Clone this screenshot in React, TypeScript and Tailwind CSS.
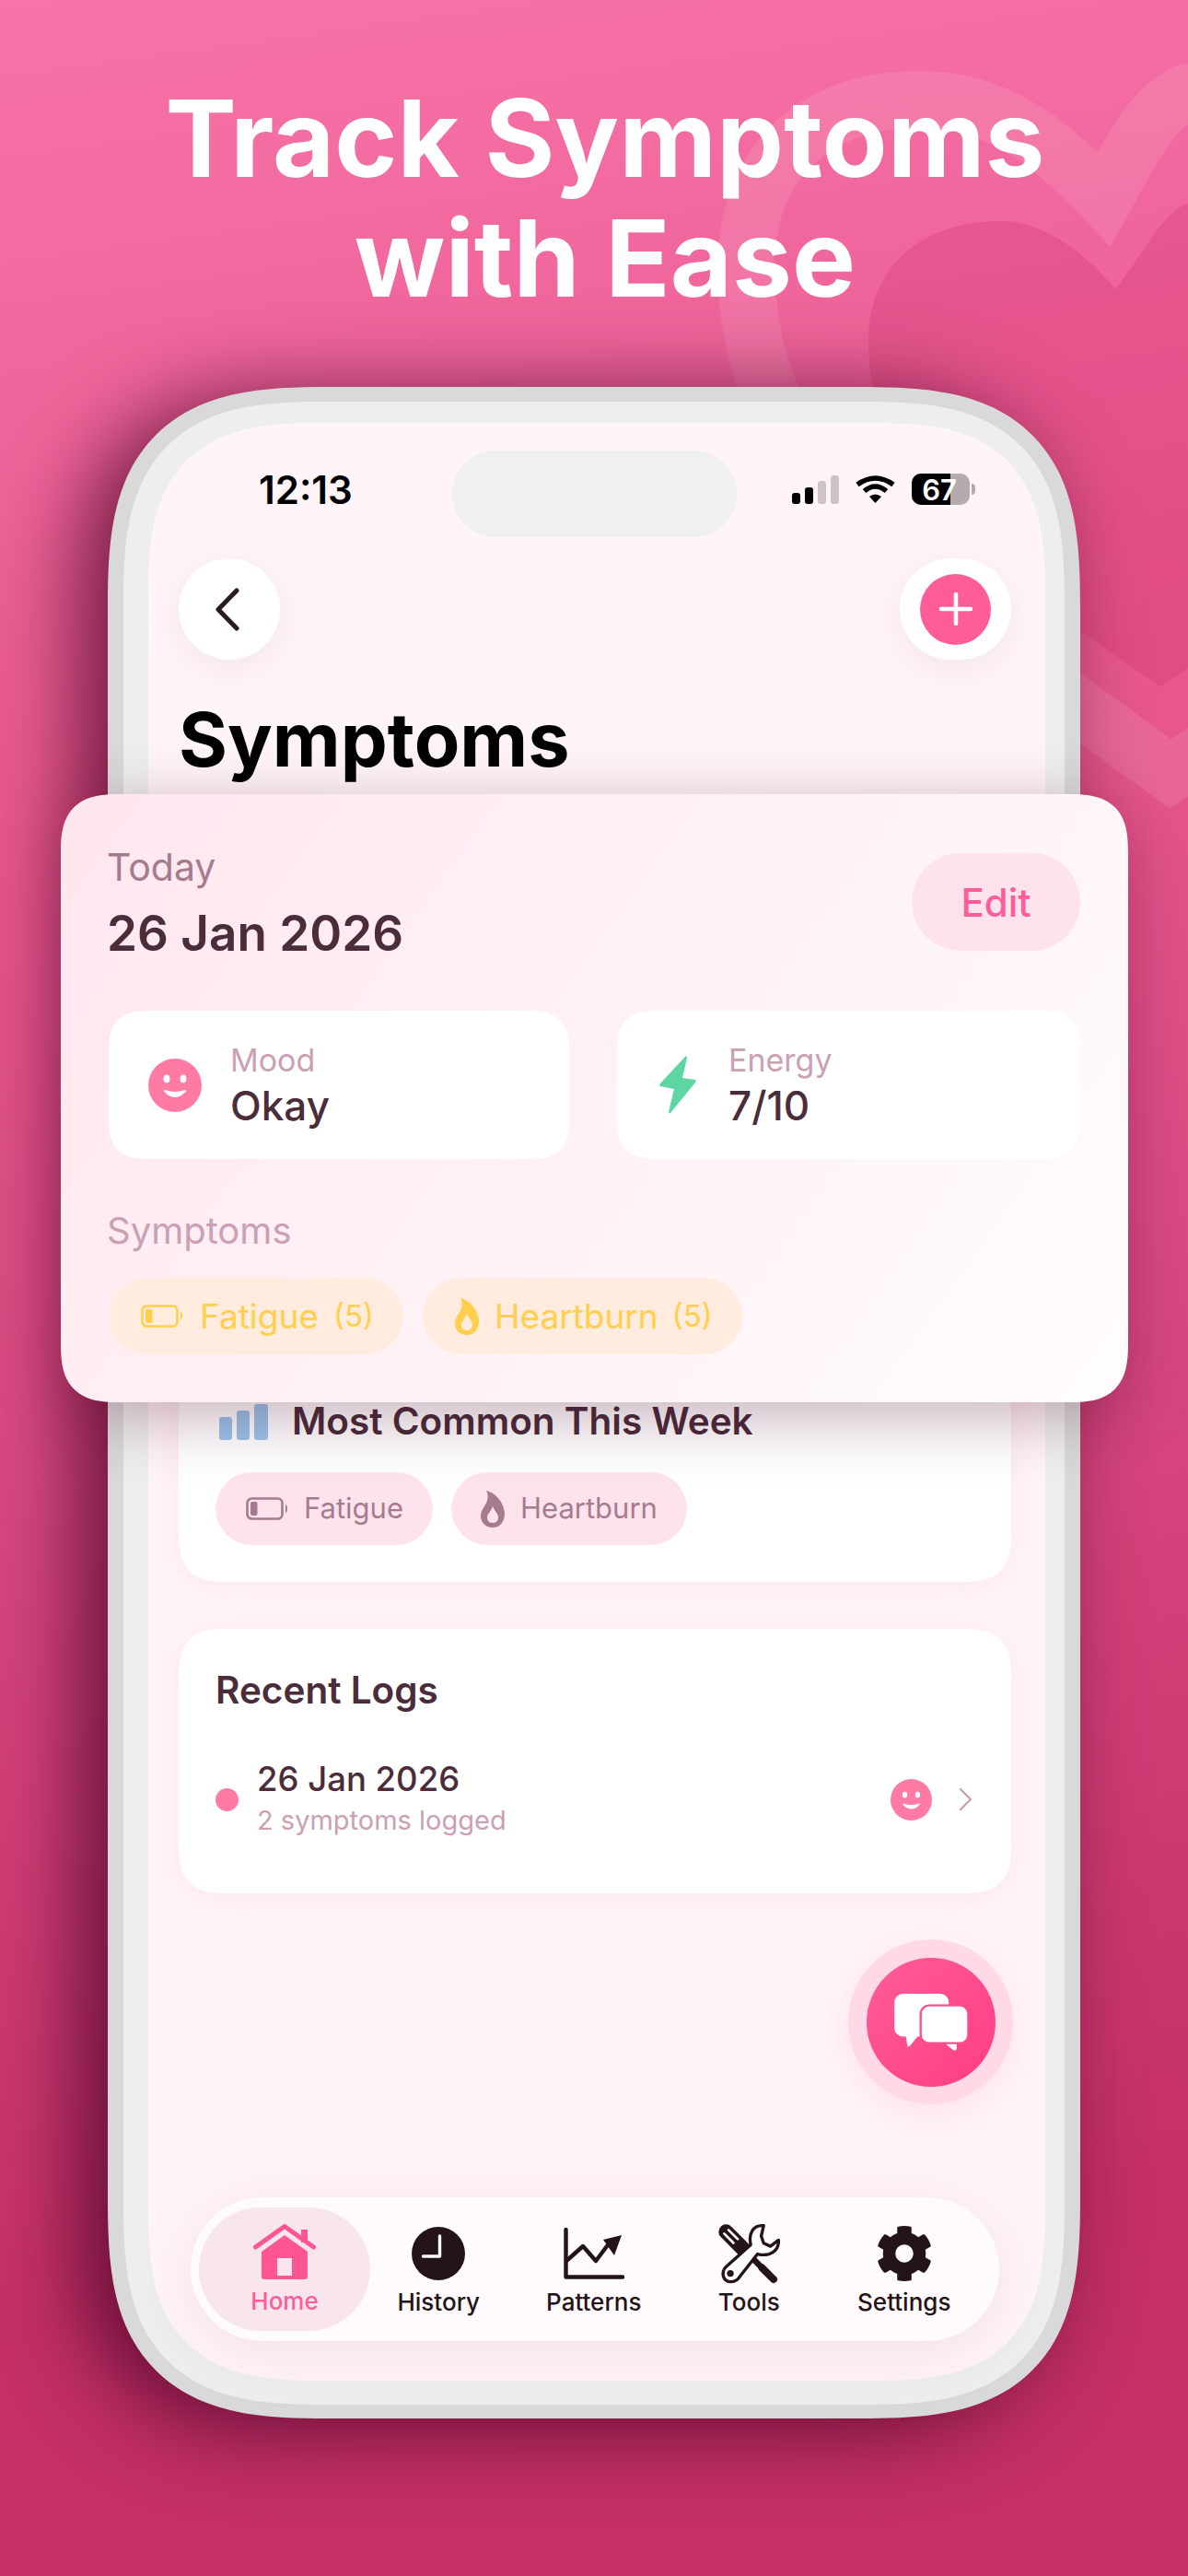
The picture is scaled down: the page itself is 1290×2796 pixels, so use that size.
import { FaCog } from "react-icons/fa";

function Hearts() {
  return (
    <svg className="absolute inset-0" width="1290" height="1000" viewBox="0 0 1290 1000" fill="none">
      <path
        d="M1211 314 C1175 270 1130 240 1087 240 C1000 240 943 290 943 370 C943 470 1000 570 1100 635 L1260 745 L1400 650 C1480 500 1480 221 1290 221 C1262 230 1240 278 1211 314 Z"
        fill="rgba(200,40,100,0.23)"
      />
      <path
        d="M1199 216 C1150 165 1090 108 1000 108 C880 108 810 180 810 290 C810 440 900 560 1010 650 L1271 840 L1420 740 C1560 560 1540 100 1290 100 C1250 115 1225 170 1199 216 Z"
        stroke="rgba(255,255,255,0.1)"
        strokeWidth="62"
      />
    </svg>
  );
}

function Smiley({ size }: { size: number }) {
  return (
    <svg width={size} height={size} viewBox="0 0 58 58" className="shrink-0">
      <circle cx="29" cy="29" r="29" fill="#ff7ba4" />
      <ellipse cx="20" cy="22" rx="3.4" ry="4.4" fill="#fff" />
      <ellipse cx="38" cy="22" rx="3.4" ry="4.4" fill="#fff" />
      <path d="M18 35 Q29 47 40 35 Q29 39 18 35 Z" fill="#fff" stroke="#fff" strokeWidth="2" strokeLinejoin="round" />
    </svg>
  );
}

function BatteryLow({ color, className }: { color: string; className?: string }) {
  return (
    <svg width="46" height="25" viewBox="0 0 46 25" fill="none" className={className}>
      <rect x="1.5" y="1.5" width="38" height="22" rx="5" stroke={color} strokeWidth="2.6" />
      <rect x="5" y="5" width="7.5" height="15" rx="2" fill={color} />
      <path d="M43.5 8.5 Q46 12.5 43.5 16.5 Z" fill={color} stroke={color} strokeWidth="1" />
    </svg>
  );
}

function Flame({ color }: { color: string }) {
  return (
    <svg width="26" height="40" viewBox="0 0 26 40" className="shrink-0">
      <path
        fillRule="evenodd"
        fill={color}
        d="M6 0 C12 1 24 8 26 24 C26 34 21 40 13 40 C5 40 0 34 0 28 C0 20 5 17 7 11 C8 7 8 3 6 0 Z M13 35 C9 35 7 32 7 29 C7 25 11 23 13 17 C15 22 19 25 19 29 C19 32 17 35 13 35 Z"
      />
    </svg>
  );
}

function HomeIcon() {
  return (
    <svg width="68" height="60" viewBox="0 0 68 60" fill="none">
      <path d="M2.5 25 L34 2.5 L65.5 25" stroke="#ff5594" strokeWidth="5" strokeLinecap="round" strokeLinejoin="round" />
      <rect x="52" y="6" width="7" height="14" fill="#ff5594" />
      <path d="M9 30 L34 12 L59 30 V57 a3 3 0 0 1 -3 3 H12 a3 3 0 0 1 -3 -3 Z" fill="#ff5594" />
      <rect x="26" y="37" width="16" height="19" fill="#f8e6ec" />
    </svg>
  );
}

function ClockIcon() {
  return (
    <svg width="58" height="58" viewBox="0 0 58 58" fill="none">
      <circle cx="29" cy="29" r="29" fill="#241319" />
      <path d="M30.5 10 V32 H12.5" stroke="#fff" strokeWidth="3.4" strokeLinecap="round" strokeLinejoin="round" />
    </svg>
  );
}

function PatternsIcon() {
  return (
    <svg width="66" height="56" viewBox="0 0 66 56" fill="none">
      <path d="M2.5 2 V53.5 H64" stroke="#241319" strokeWidth="4.4" strokeLinecap="round" strokeLinejoin="round" />
      <path d="M3 36 L21 20 L35 36 L50 16" stroke="#241319" strokeWidth="4.4" strokeLinejoin="round" />
      <path d="M43 13 L63 8 L55 30 Z" fill="#241319" />
    </svg>
  );
}

function ToolsIcon() {
  return (
    <svg width="68" height="66" viewBox="0 0 203 197" fill="none">
      <path d="M28 28 L82 82" stroke="#241319" strokeWidth="48" strokeLinecap="round" />
      <path d="M80 80 L150 150" stroke="#241319" strokeWidth="20" />
      <path d="M145 145 L182 182" stroke="#241319" strokeWidth="24" strokeLinecap="round" />
      <path d="M22 34 L52 64 M36 22 L66 52" stroke="#fff" strokeWidth="8" strokeLinecap="round" />
      <path
        d="M150 8 C115 5 100 35 108 70 L32 138 C10 155 15 190 45 190 C60 190 68 182 75 170 L130 100 C170 110 200 90 198 55 L172 75 L150 65 L142 42 Z"
        fill="#fff"
        stroke="#241319"
        strokeWidth="10"
        strokeLinejoin="round"
      />
      <circle cx="42" cy="163" r="11" fill="#241319" />
    </svg>
  );
}

function ChatIcon() {
  return (
    <svg width="80" height="62" viewBox="0 0 240 187" fill="none">
      <path d="M36 130 L42 168 Q44 178 52 170 L84 130 Z" fill="#fff" />
      <rect x="0" y="0" width="178" height="140" rx="28" fill="#fff" />
      <path d="M150 150 L192 184 Q204 190 204 178 V150 Z" fill="#fff" />
      <rect x="86" y="38" width="156" height="124" rx="28" fill="#fff" stroke="#ff4f8e" strokeWidth="7" />
    </svg>
  );
}

function StatusIcons() {
  return (
    <div className="flex items-center pb-[10px]">
      <div className="flex items-end gap-[5px]">
        <div className="h-[12px] w-[9px] rounded-[3px] bg-black" />
        <div className="h-[18px] w-[9px] rounded-[3px] bg-black" />
        <div className="h-[25px] w-[9px] rounded-[3px] bg-[#cdc3c8]" />
        <div className="h-[31px] w-[9px] rounded-[3px] bg-[#cdc3c8]" />
      </div>
      <svg width="43" height="32" viewBox="0 0 43 32" fill="none" className="ml-[18px]">
        <path d="M2 11 Q21.5 -3 41 11" stroke="#000" strokeWidth="5.5" />
        <path d="M9.5 18 Q21.5 8 33.5 18" stroke="#000" strokeWidth="5.5" />
        <path d="M15 24 Q21.5 19 28 24 L21.5 31 Z" fill="#000" />
      </svg>
      <div className="relative ml-[18px] h-[34px] w-[63px] overflow-hidden rounded-[10px] bg-[#b5abae]">
        <div className="absolute inset-y-0 left-0 w-[42px] bg-black" />
        <span className="absolute inset-0 flex items-center justify-center pr-[3px] text-[31px] font-semibold leading-none text-white">
          67
        </span>
      </div>
      <div className="ml-[2px] h-[12px] w-[4px] rounded-r-full bg-[#b5abae]" />
    </div>
  );
}

function MoodCard(props: { icon: React.ReactNode; label: string; value: string; pad: string; gap: string }) {
  return (
    <div className={`flex h-[161px] flex-1 items-center rounded-[46px] bg-white [corner-shape:superellipse(1.5)] ${props.pad}`}>
      <div className={props.gap}>{props.icon}</div>
      <div>
        <p className="text-[34px] leading-[44px] text-[#c9a0b4]">{props.label}</p>
        <p className="text-[44px] font-medium leading-[54px] text-[#4a2c3a]">{props.value}</p>
      </div>
    </div>
  );
}

function TodayCard() {
  return (
    <div className="absolute left-[66px] top-[862px] w-[1159px] rounded-[66px] bg-[linear-gradient(125deg,#ffe6ee_0%,#fff2f6_50%,#fffcfd_100%)] px-[52px] pb-[52px] pt-[55px] shadow-[0_16px_70px_rgba(70,10,40,0.32)] [corner-shape:superellipse(1.5)]">
      <div className="flex items-start justify-between">
        <div className="-ml-[2px]">
          <p className="text-[41px] leading-[48px] text-[#a67b90]">Today</p>
          <p className="mt-[17px] text-[53px] font-semibold leading-[62px] text-[#4a2c3a]">26 Jan 2026</p>
        </div>
        <div className="mt-[9px] flex h-[106px] w-[183px] items-center justify-center rounded-[53px] bg-[#ffe3ec] text-[42px] font-medium text-[#ff5c9a]">
          Edit
        </div>
      </div>
      <div className="mt-[53px] flex gap-[52px]">
        <MoodCard icon={<Smiley size={58} />} label="Mood" value="Okay" pad="pl-[43px]" gap="mr-[31px]" />
        <MoodCard
          icon={
            <svg width="40" height="63" viewBox="0 0 40 63" className="block">
              <path
                d="M28 1 C29 0 30 1 30 2 L25 24 L39 26 C40 26 40 28 39 29 L12 62 C11 63 10 62 10 61 L16 36 L1 33 C0 33 0 31 1 30 Z"
                fill="#5dd6a3"
              />
            </svg>
          }
          label="Energy"
          value="7/10"
          pad="pl-[46px]"
          gap="mr-[35px]"
        />
      </div>
      <p className="-ml-[2px] mt-[54px] text-[40px] leading-[48px] text-[#c9a0b4]">Symptoms</p>
      <div className="mt-[27px] flex gap-[21px]">
        <div className="flex h-[83px] w-[320px] items-center rounded-[42px] bg-[#ffecdf] pl-[35px] text-[37px] text-[#ffcf4d]">
          <BatteryLow color="#ffcf4d" className="mr-[18px] shrink-0" />
          Fatigue
          <span className="ml-[16px] text-[33px]">(5)</span>
        </div>
        <div className="flex h-[83px] w-[347px] items-center rounded-[42px] bg-[#ffecdf] pl-[35px] text-[37px] text-[#ffcf4d]">
          <Flame color="#ffcf4d" />
          <span className="ml-[17px]">Heartburn</span>
          <span className="ml-[15px] text-[33px]">(5)</span>
        </div>
      </div>
    </div>
  );
}

const tabs = [
  { label: "History", icon: <ClockIcon /> },
  { label: "Patterns", icon: <PatternsIcon /> },
  { label: "Tools", icon: <ToolsIcon /> },
  { label: "Settings", icon: <FaCog size={62} color="#241319" /> },
];

function BottomNav() {
  return (
    <div className="mb-[43px] ml-[13px] mt-auto flex h-[156px] w-[878px] items-center rounded-[78px] bg-[#fffafb] pl-[9px] shadow-[0_12px_70px_rgba(120,40,70,0.1)]">
      <div className="flex h-[134px] w-[186px] shrink-0 flex-col items-center rounded-[67px] bg-[#f8e6ec] pt-[18px] text-[26px] font-medium text-[#ff5c9a]">
        <HomeIcon />
        <span className="mt-[8px] leading-[32px]">Home</span>
      </div>
      <div className="-ml-[10px] flex">
        {tabs.map((tab) => (
          <div key={tab.label} className="flex w-[168.5px] flex-col items-center pt-[2px] text-[26px] font-medium text-[#241319]">
            <div className="flex h-[64px] items-center">{tab.icon}</div>
            <span className="mt-[5px] leading-[32px]">{tab.label}</span>
          </div>
        ))}
      </div>
    </div>
  );
}

export default function App() {
  return (
    <div className="relative h-[2796px] w-[1290px] overflow-hidden bg-[linear-gradient(172deg,#f773a9_0%,#e9598f_28%,#d94a82_52%,#c42f67_85%,#c32f66_100%)] font-['Inter',sans-serif]">
      <Hearts />
      <h1 className="relative pl-[24px] pt-[85px] text-center text-[116px] font-bold leading-[130px] text-white">
        Track Symptoms
        <br />
        with Ease
      </h1>

      <div className="relative ml-[117px] mt-[75px] h-[2205px] w-[1056px] rounded-[240px] bg-[#d9d9d9] pb-[15px] pl-[17px] pr-[17px] pt-[16px] shadow-[-30px_10px_90px_rgba(60,0,30,0.72)] [corner-shape:superellipse(1.5)]">
        <div className="h-full rounded-[220px] bg-[#eeeeee] pb-[26px] pl-[27px] pr-[21px] pt-[23px] [corner-shape:superellipse(1.5)]">
          <div className="flex h-full flex-col rounded-[190px] bg-[#fff5f8] pl-[33px] pr-[37px] [corner-shape:superellipse(1.5)]">
            <div className="mt-[30px] flex h-[94px] items-center">
              <span className="w-[297px] shrink-0 pb-[8px] pl-[87px] text-[42px] font-semibold leading-none text-black">12:13</span>
              <div className="h-[94px] w-[309px] shrink-0 rounded-[47px] bg-[#f0f0f0]" />
              <div className="ml-[60px]">
                <StatusIcons />
              </div>
            </div>

            <div className="mt-[23px] flex items-center justify-between">
              <div className="flex h-[110px] w-[110px] items-center justify-center rounded-full bg-white pr-[5px] shadow-[0_10px_40px_rgba(120,40,70,0.08)]">
                <svg width="27" height="47" viewBox="0 0 27 47" fill="none">
                  <path d="M24 3 L4 23.5 L24 44" stroke="#2a1a22" strokeWidth="5" strokeLinecap="round" strokeLinejoin="round" />
                </svg>
              </div>
              <div className="flex h-[110px] w-[121px] items-center justify-center rounded-full bg-white shadow-[0_10px_40px_rgba(120,40,70,0.08)]">
                <div className="flex h-[77px] w-[77px] items-center justify-center rounded-full bg-[#ff5c9a]">
                  <svg width="36" height="36" viewBox="0 0 36 36" fill="none">
                    <path d="M18 2 V34 M2 18 H34" stroke="#fff" strokeWidth="4.5" strokeLinecap="round" />
                  </svg>
                </div>
              </div>
            </div>

            <h2 className="mt-[42px] text-[81px] font-bold leading-[90px] text-black">Symptoms</h2>

            <div className="mt-[612px] rounded-[54px] bg-white px-[40px] pb-[40px] pt-[63px] shadow-[0_4px_30px_rgba(255,150,190,0.15)] [corner-shape:superellipse(1.5)]">
              <div className="flex items-center">
                <svg width="53" height="39" viewBox="0 0 53 39" className="ml-[4px] mr-[26px]">
                  <rect x="0" y="14" width="14" height="25" rx="3" fill="#9bc5ec" />
                  <rect x="19" y="7" width="14" height="32" rx="3" fill="#9bc5ec" />
                  <rect x="38" y="0" width="15" height="39" rx="3" fill="#9bc5ec" />
                </svg>
                <span className="text-[40.5px] font-semibold leading-[40px] text-[#4a2c3a]">Most Common This Week</span>
              </div>
              <div className="mt-[35px] flex gap-[20px]">
                <div className="flex h-[79px] w-[236px] items-center rounded-[40px] bg-[#ffe3ec] pl-[33px] text-[31px] text-[#a67b90]">
                  <BatteryLow color="#a67b90" className="mr-[17px] shrink-0" />
                  Fatigue
                </div>
                <div className="flex h-[79px] w-[256px] items-center rounded-[40px] bg-[#ffe3ec] pl-[32px] text-[31px] text-[#a67b90]">
                  <Flame color="#a67b90" />
                  <span className="ml-[17px]">Heartburn</span>
                </div>
              </div>
            </div>

            <div className="mt-[51px] h-[287px] rounded-[54px] bg-white px-[40px] pt-[47px] shadow-[0_4px_30px_rgba(255,150,190,0.15)] [corner-shape:superellipse(1.5)]">
              <p className="text-[40.5px] font-semibold leading-[40px] text-[#4a2c3a]">Recent Logs</p>
              <div className="mt-[53px] flex items-center">
                <div className="h-[25px] w-[25px] rounded-full bg-[#ff7ba4]" />
                <div className="ml-[20px] flex-1">
                  <p className="text-[36.5px] font-medium leading-[46px] text-[#4a2c3a]">26 Jan 2026</p>
                  <p className="text-[29px] leading-[44px] text-[#c9a0b4]">2 symptoms logged</p>
                </div>
                <Smiley size={45} />
                <svg width="15" height="26" viewBox="0 0 15 26" fill="none" className="ml-[29px] mr-[2px]">
                  <path d="M2 2 L13 13 L2 24" stroke="#c9a0b4" strokeWidth="2.4" strokeLinecap="round" strokeLinejoin="round" />
                </svg>
              </div>
            </div>

            <div className="-mr-[2px] mt-[50px] flex h-[179px] w-[179px] items-center justify-center self-end rounded-full bg-[#ffd9e5] shadow-[0_12px_40px_rgba(255,90,150,0.12)]">
              <div className="flex h-[140px] w-[140px] items-center justify-center rounded-full bg-[linear-gradient(135deg,#ff5c9a,#ff3d85)]">
                <ChatIcon />
              </div>
            </div>

            <BottomNav />
          </div>
        </div>
      </div>

      <TodayCard />
    </div>
  );
}
